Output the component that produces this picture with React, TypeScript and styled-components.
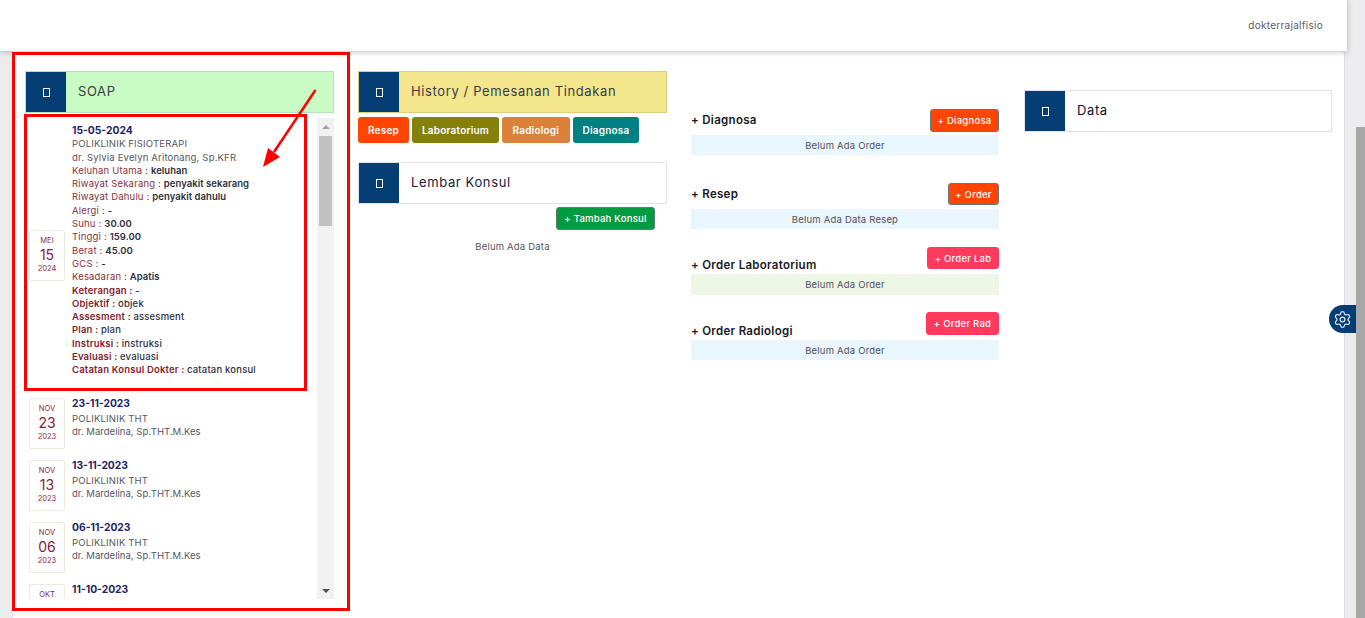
import React from "react";
import styled, { createGlobalStyle } from "styled-components";
import { Settings } from "lucide-react";

const Global = createGlobalStyle`
  html, body { margin: 0; padding: 0; height: 100%; overflow: hidden; }
  body { font-family: Inter, "Noto Sans", "Liberation Sans", sans-serif; background: #f3f3f5; color: #4f4f5c; }
`;

const Shell = styled.div`
  position: relative;
  display: flex;
  width: 1365px;
  height: 618px;
  overflow: hidden;
`;

const Content = styled.div`
  flex: 1;
  display: flex;
  flex-direction: column;
  background: #ececee;
`;

const Header = styled.header`
  position: relative;
  z-index: 2;
  width: 1347px;
  height: 51px;
  flex: none;
  box-sizing: border-box;
  background: #fff;
  box-shadow: 0 1px 6px rgba(0, 0, 0, 0.25);
  display: flex;
  align-items: center;
  justify-content: flex-end;
  padding: 0 24px 1px 0;
`;

const UserName = styled.span`
  font-size: 10px;
  letter-spacing: 0.28px;
  color: #5c5c66;
`;

const Body = styled.div`
  flex: 1;
  margin: 0 11px 0 12px;
  padding: 20px 0 0 12px;
  background: #fff;
  border-right: 1px solid #dcdce2;
  border-left: 1px solid #e8e8ec;
  border-top-right-radius: 4px;
  box-sizing: border-box;
  display: grid;
  grid-template-columns: 309px 309px 309px 308px;
  column-gap: 24px;
  align-items: start;
`;

const Column = styled.section<{ $top?: number; $inset?: number }>`
  min-width: 0;
  margin-top: ${(p) => p.$top ?? 0}px;
  padding-right: ${(p) => p.$inset ?? 0}px;
`;

const TitleBar = styled.div<{ $bg?: string; $line?: string }>`
  display: flex;
  align-items: center;
  height: 42px;
  box-sizing: border-box;
  background: ${(p) => p.$bg ?? "#fff"};
  border: 1px solid ${(p) => p.$line ?? "#e0e3ee"};
`;

const IconBlock = styled.div`
  width: 40px;
  align-self: stretch;
  background: #043e74;
  display: flex;
  align-items: center;
  justify-content: center;
  flex: none;
`;

const MissingGlyph = styled.span`
  display: block;
  width: 5px;
  height: 7px;
  margin-left: 1px;
  border: 1px solid #fff;
`;

const BarTitle = styled.h2<{ $ink?: string }>`
  margin: 0 0 2px 12px;
  font-size: 13px;
  font-weight: 400;
  letter-spacing: 0.62px;
  color: ${(p) => p.$ink ?? "#3b3b48"};
`;

const ListWrap = styled.div`
  display: flex;
  height: 481px;
  margin-top: 5px;
`;

const VisitList = styled.div`
  flex: 1;
  overflow: hidden;
  padding: 6px 0 0 4px;
`;

const Visit = styled.div<{ $top?: boolean }>`
  display: flex;
  align-items: ${(p) => (p.$top ? "flex-start" : "center")};
  gap: 7px;
  padding-bottom: 11px;
`;

const DateBox = styled.div`
  width: 36px;
  height: 51px;
  flex: none;
  box-sizing: border-box;
  border: 1px solid #ecebdf;
  border-radius: 2px;
  background: #fff;
  display: flex;
  flex-direction: column;
  align-items: center;
  justify-content: center;
  gap: 1px;
  color: #8d2b4a;
`;

const DateSmall = styled.span`
  font-size: 7.5px;
  line-height: 10px;
`;

const DateDay = styled.span`
  font-size: 14px;
  line-height: 16px;
  color: #85203a;
`;

const VisitBody = styled.div<{ $tail?: number; $lift?: number }>`
  flex: 1;
  min-width: 0;
  padding-bottom: ${(p) => p.$tail ?? 0}px;
  margin-top: ${(p) => -(p.$lift ?? 0)}px;
`;

const VisitDate = styled.div`
  font-size: 10.3px;
  line-height: 13.3px;
  font-weight: 700;
  color: #1f1f66;
`;

const Line = styled.div<{ $shift?: number; $tight?: boolean }>`
  font-size: 9.5px;
  line-height: 13.3px;
  letter-spacing: ${(p) => (p.$tight ? 0.03 : 0.18)}px;
  color: #565662;
  white-space: nowrap;
  margin-top: ${(p) => p.$shift ?? 0}px;
`;

const Label = styled.span<{ $strong?: boolean }>`
  color: ${(p) => (p.$strong ? "#861c2c" : "#8a3040")};
  font-weight: ${(p) => (p.$strong ? 600 : 400)};
`;

const Value = styled.span<{ $plain?: boolean }>`
  color: #2f2f3c;
  font-weight: ${(p) => (p.$plain ? 500 : 600)};
  letter-spacing: ${(p) => (p.$plain ? 0.18 : 0.05)}px;
`;

const ListScroll = styled.div`
  width: 17px;
  flex: none;
  background: #f1f1f1;
  display: flex;
  flex-direction: column;
  align-items: center;
`;

const ArrowUp = styled.i`
  display: block;
  margin: 7px 0 7px;
  border-left: 4px solid transparent;
  border-right: 4px solid transparent;
  border-bottom: 4px solid #a3a3a3;
`;

const ArrowDown = styled.i`
  display: block;
  margin: auto 0 6px;
  border-left: 4px solid transparent;
  border-right: 4px solid transparent;
  border-top: 4px solid #505050;
`;

const ListThumb = styled.div`
  width: 13px;
  height: 90px;
  background: #c1c1c1;
`;

const ActionRow = styled.div`
  display: flex;
  gap: 3px;
  margin: 4px 0 19px;
`;

const Pill = styled.button<{ $bg: string; $pad?: number }>`
  height: 26px;
  padding: 0 ${(p) => p.$pad ?? 10}px;
  border: 0;
  border-radius: 3px;
  background: ${(p) => p.$bg};
  color: #fff;
  font: 600 10px Inter, sans-serif;
  letter-spacing: 0.2px;
`;

const AddRow = styled.div`
  display: flex;
  justify-content: flex-end;
  padding-right: 12px;
  margin-top: 3px;
`;

const OutlineBtn = styled.button<{ $bg: string; $line?: string; $w: number; $h: number }>`
  width: ${(p) => p.$w}px;
  height: ${(p) => p.$h}px;
  padding: 0;
  box-sizing: border-box;
  border: 1px solid ${(p) => p.$line ?? p.$bg};
  border-radius: 3px;
  background: ${(p) => p.$bg};
  color: #fff;
  font: 500 9.5px Inter, sans-serif;
  letter-spacing: 0.25px;
`;

const Empty = styled.p`
  margin: 10px 0 0;
  font-size: 9.5px;
  line-height: 13px;
  letter-spacing: 0.2px;
  text-align: center;
  color: #55555f;
`;

const OrderGroup = styled.div<{ $after: number }>`
  margin-bottom: ${(p) => p.$after}px;
`;

const OrderHead = styled.div<{ $end?: boolean; $gap: number }>`
  display: flex;
  justify-content: space-between;
  align-items: ${(p) => (p.$end ? "flex-end" : "center")};
  margin-bottom: ${(p) => p.$gap}px;
`;

const OrderTitle = styled.h3<{ $drop?: number }>`
  margin: 0 0 ${(p) => -(p.$drop ?? 0)}px;
  font-size: 11.5px;
  line-height: 13px;
  font-weight: 600;
  letter-spacing: 0.3px;
  color: #17171f;
`;

const Strip = styled.div<{ $bg?: string; $h?: number }>`
  height: ${(p) => p.$h ?? 20}px;
  display: flex;
  align-items: center;
  justify-content: center;
  background: ${(p) => p.$bg ?? "#eaf6fd"};
  font-size: 9.5px;
  letter-spacing: 0.2px;
  color: #50505c;
`;

const PageScroll = styled.div`
  width: 9px;
  flex: none;
  background: #ececee;
  display: flex;
  flex-direction: column;
`;

const PageThumb = styled.div`
  margin-top: 127px;
  flex: 1;
  background: #a8a8a8;
`;

// floating tab at the right edge
const GearTab = styled.div`
  position: absolute;
  left: 1329px;
  top: 305px;
  width: 27px;
  height: 28px;
  border-radius: 14px 0 0 14px;
  background: #043e74;
  display: flex;
  align-items: center;
  justify-content: center;
  color: #d9e4ef;
`;

// red annotations drawn over the screenshot
const Marker = styled.div<{ $x: number; $y: number; $w: number; $h: number }>`
  position: absolute;
  left: ${(p) => p.$x}px;
  top: ${(p) => p.$y}px;
  width: ${(p) => p.$w}px;
  height: ${(p) => p.$h}px;
  box-sizing: border-box;
  border: 3px solid #f00;
  pointer-events: none;
  z-index: 5;
`;

const ArrowMark = styled.svg`
  position: absolute;
  left: 255px;
  top: 85px;
  z-index: 6;
`;

const visits = [
  { mon: "NOV", day: "23", year: "2023", date: "23-11-2023" },
  { mon: "NOV", day: "13", year: "2023", date: "13-11-2023" },
  { mon: "NOV", day: "06", year: "2023", date: "06-11-2023" },
  { mon: "OKT", day: "11", year: "2023", date: "11-10-2023" },
];

const vitals: [string, string][] = [
  ["Keluhan Utama", "keluhan"],
  ["Riwayat Sekarang", "penyakit sekarang"],
  ["Riwayat Dahulu", "penyakit dahulu"],
  ["Alergi", "-"],
  ["Suhu", "30.00"],
  ["Tinggi", "159.00"],
  ["Berat", "45.00"],
  ["GCS", "-"],
  ["Kesadaran", "Apatis"],
];

const soap: [string, string][] = [
  ["Keterangan", "-"],
  ["Objektif", "objek"],
  ["Assesment", "assesment"],
  ["Plan", "plan"],
  ["Instruksi", "instruksi"],
  ["Evaluasi", "evaluasi"],
  ["Catatan Konsul Dokter", "catatan konsul"],
];

const Bar = (props: { title: string; bg?: string; line?: string; ink?: string }) => (
  <TitleBar $bg={props.bg} $line={props.line}>
    <IconBlock>
      <MissingGlyph />
    </IconBlock>
    <BarTitle $ink={props.ink}>{props.title}</BarTitle>
  </TitleBar>
);

const DateCard = (props: { mon: string; day: string; year: string }) => (
  <DateBox>
    <DateSmall>{props.mon}</DateSmall>
    <DateDay>{props.day}</DateDay>
    <DateSmall>{props.year}</DateSmall>
  </DateBox>
);

export default function App() {
  return (
    <Shell>
      <Global />
      <Content>
        <Header>
          <UserName>dokterrajalfisio</UserName>
        </Header>
        <Body>
          <Column>
            <Bar title="SOAP" bg="#c9fcc4" line="#b4e3b4" />
            <ListWrap>
              <VisitList>
                <Visit>
                  <DateCard mon="MEI" day="15" year="2024" />
                  <VisitBody $tail={10}>
                    <VisitDate>15-05-2024</VisitDate>
                    <Line>POLIKLINIK FISIOTERAPI</Line>
                    <Line>dr. Sylvia Evelyn Aritonang, Sp.KFR</Line>
                    {vitals.map(([k, v]) => (
                      <Line key={k}>
                        <Label>{k} : </Label>
                        <Value>{v}</Value>
                      </Line>
                    ))}
                    {soap.map(([k, v]) => (
                      <Line key={k}>
                        <Label $strong>{k} : </Label>
                        <Value $plain>{v}</Value>
                      </Line>
                    ))}
                  </VisitBody>
                </Visit>
                {visits.map((v) => (
                  <Visit key={v.date} $top>
                    <DateCard mon={v.mon} day={v.day} year={v.year} />
                    <VisitBody $lift={1}>
                      <VisitDate>{v.date}</VisitDate>
                      <Line $shift={2}>POLIKLINIK THT</Line>
                      <Line $tight>dr. Mardelina, Sp.THT.M.Kes</Line>
                    </VisitBody>
                  </Visit>
                ))}
              </VisitList>
              <ListScroll>
                <ArrowUp />
                <ListThumb />
                <ArrowDown />
              </ListScroll>
            </ListWrap>
          </Column>

          <Column>
            <Bar title="History / Pemesanan Tindakan" bg="#f3e68d" line="#d9cf80" />
            <ActionRow>
              <Pill $bg="#ff4500">Resep</Pill>
              <Pill $bg="#85800a">Laboratorium</Pill>
              <Pill $bg="#dc8238" $pad={10.5}>Radiologi</Pill>
              <Pill $bg="#008080" $pad={10}>Diagnosa</Pill>
            </ActionRow>
            <Bar title="Lembar Konsul" ink="#20203a" />
            <AddRow>
              <OutlineBtn $bg="#009c3f" $line="#5f7d6c" $w={99} $h={23}>
                + Tambah Konsul
              </OutlineBtn>
            </AddRow>
            <Empty>Belum Ada Data</Empty>
          </Column>

          <Column $top={38} $inset={1}>
            <OrderGroup $after={28}>
              <OrderHead $gap={3}>
                <OrderTitle>+ Diagnosa</OrderTitle>
                <OutlineBtn $bg="#ff4500" $line="#6c757d" $w={69} $h={23}>
                  + Diagnosa
                </OutlineBtn>
              </OrderHead>
              <Strip>Belum Ada Order</Strip>
            </OrderGroup>
            <OrderGroup $after={18}>
              <OrderHead $gap={4}>
                <OrderTitle>+ Resep</OrderTitle>
                <OutlineBtn $bg="#ff4500" $line="#6c757d" $w={51} $h={22}>
                  + Order
                </OutlineBtn>
              </OrderHead>
              <Strip>Belum Ada Data Resep</Strip>
            </OrderGroup>
            <OrderGroup $after={17}>
              <OrderHead $end $gap={5}>
                <OrderTitle $drop={3}>+ Order Laboratorium</OrderTitle>
                <OutlineBtn $bg="#ff3a5c" $w={72} $h={22}>
                  + Order Lab
                </OutlineBtn>
              </OrderHead>
              <Strip $bg="#eef6e6" $h={21}>Belum Ada Order</Strip>
            </OrderGroup>
            <OrderGroup $after={0}>
              <OrderHead $end $gap={5}>
                <OrderTitle $drop={3}>+ Order Radiologi</OrderTitle>
                <OutlineBtn $bg="#ff3a5c" $w={73} $h={23}>
                  + Order Rad
                </OutlineBtn>
              </OrderHead>
              <Strip>Belum Ada Order</Strip>
            </OrderGroup>
          </Column>

          <Column $top={19}>
            <Bar title="Data" ink="#10102a" />
          </Column>
        </Body>
      </Content>
      <PageScroll>
        <PageThumb />
      </PageScroll>

      <GearTab>
        <Settings size={19} strokeWidth={1.6} />
      </GearTab>
      <Marker $x={12} $y={52} $w={338} $h={559} />
      <Marker $x={24} $y={114} $w={283} $h={277} />
      <ArrowMark width="70" height="90" viewBox="0 0 70 90">
        <line x1="60.5" y1="5" x2="19" y2="67" stroke="#f00" strokeWidth="2.5" />
        <polygon points="8,82 25,72 13,63" fill="#f00" />
      </ArrowMark>
    </Shell>
  );
}
